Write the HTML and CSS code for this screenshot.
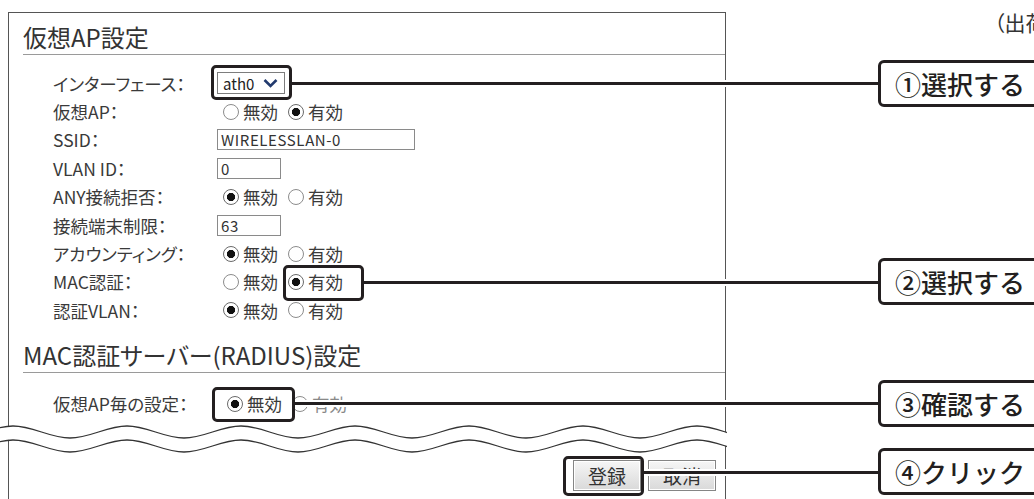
FILE: index.html
```html
<!DOCTYPE html>
<html lang="ja">
<head>
    <meta charset="utf-8">
    <title>仮想AP設定</title>
    <link rel="stylesheet" href="styles.css">
</head>
<body>
<div class="page">
    <div class="panel">
        <h2 class="section-title">仮想AP設定</h2>
        <div class="rows">
            <div class="label">インターフェース：</div>
            <div class="field">
                <div class="select">
                    <span>ath0</span>
                    <svg class="chevron" width="15" height="10" viewBox="0 0 15 10"><path d="M1.5 2 L7.5 8 L13.5 2" fill="none" stroke="#223a6e" stroke-width="2.6"/></svg>
                </div>
            </div>

            <div class="label">仮想AP：</div>
            <div class="field radios">
                <label><input type="radio" name="vap">無効</label>
                <label><input type="radio" name="vap" checked>有効</label>
            </div>

            <div class="label">SSID：</div>
            <div class="field"><input type="text" class="text-input wide" value="WIRELESSLAN-0"></div>

            <div class="label">VLAN ID：</div>
            <div class="field"><input type="text" class="text-input" value="0"></div>

            <div class="label">ANY接続拒否：</div>
            <div class="field radios">
                <label><input type="radio" name="any" checked>無効</label>
                <label><input type="radio" name="any">有効</label>
            </div>

            <div class="label">接続端末制限：</div>
            <div class="field"><input type="text" class="text-input" value="63"></div>

            <div class="label">アカウンティング：</div>
            <div class="field radios">
                <label><input type="radio" name="acct" checked>無効</label>
                <label><input type="radio" name="acct">有効</label>
            </div>

            <div class="label">MAC認証：</div>
            <div class="field radios">
                <label><input type="radio" name="mac">無効</label>
                <label><input type="radio" name="mac" checked>有効</label>
            </div>

            <div class="label">認証VLAN：</div>
            <div class="field radios">
                <label><input type="radio" name="avlan" checked>無効</label>
                <label><input type="radio" name="avlan">有効</label>
            </div>
        </div>

        <h2 class="section-title title-radius">MAC認証サーバー(RADIUS)設定</h2>
        <div class="rows rows-radius">
            <div class="label">仮想AP毎の設定：</div>
            <div class="field radios radios-radius">
                <label><input type="radio" name="perap" checked>無効</label>
                <label class="faded"><input type="radio" name="perap">有効</label>
            </div>
        </div>

        <div class="buttons">
            <button class="btn">登録</button>
            <button class="btn">取消</button>
        </div>
    </div>

    <!-- 省略の波線 -->
    <svg class="break" width="727" height="40" viewBox="0 0 727 40">
        <path d="M-101,13 c20.5,0 36.5,12 57,12 s36.5,-12 57,-12 s36.5,12 57,12 s36.5,-12 57,-12 s36.5,12 57,12 s36.5,-12 57,-12 s36.5,12 57,12 s36.5,-12 57,-12 s36.5,12 57,12 s36.5,-12 57,-12 s36.5,12 57,12 s36.5,-12 57,-12 s36.5,12 57,12 s36.5,-12 57,-12 s36.5,12 57,12 s36.5,-12 57,-12" fill="none" stroke="#fff" stroke-width="13"/>
        <path d="M-101,6 c20.5,0 36.5,12 57,12 s36.5,-12 57,-12 s36.5,12 57,12 s36.5,-12 57,-12 s36.5,12 57,12 s36.5,-12 57,-12 s36.5,12 57,12 s36.5,-12 57,-12 s36.5,12 57,12 s36.5,-12 57,-12 s36.5,12 57,12 s36.5,-12 57,-12 s36.5,12 57,12 s36.5,-12 57,-12 s36.5,12 57,12 s36.5,-12 57,-12" fill="none" stroke="#333" stroke-width="1.3"/>
        <path d="M-101,20 c20.5,0 36.5,12 57,12 s36.5,-12 57,-12 s36.5,12 57,12 s36.5,-12 57,-12 s36.5,12 57,12 s36.5,-12 57,-12 s36.5,12 57,12 s36.5,-12 57,-12 s36.5,12 57,12 s36.5,-12 57,-12 s36.5,12 57,12 s36.5,-12 57,-12 s36.5,12 57,12 s36.5,-12 57,-12 s36.5,12 57,12 s36.5,-12 57,-12" fill="none" stroke="#333" stroke-width="1.3"/>
    </svg>

    <div class="note">（出荷時の設定）</div>

    <!-- 手順の注記 -->
    <div class="leader leader-1"></div>
    <div class="leader leader-2"></div>
    <div class="leader leader-3"></div>
    <div class="leader leader-4"></div>

    <div class="ring ring-1"></div>
    <div class="ring ring-2"></div>
    <div class="ring ring-3"></div>
    <div class="ring ring-4"></div>

    <div class="callout callout-1">①選択する</div>
    <div class="callout callout-2">②選択する</div>
    <div class="callout callout-3">③確認する</div>
    <div class="callout callout-4">④クリック</div>
</div>
</body>
</html>
```

FILE: styles.css
```css
body {
    margin: 0;
    width: 1034px;
    height: 499px;
    overflow: hidden;
    background-color: #fff;
    font-family: "Noto Sans CJK JP", "Noto Sans", sans-serif;
    font-feature-settings: "palt";
    color: #333;
}

.page {
    position: relative;
    width: 1034px;
    height: 499px;
    padding: 12px 0 0 8px;
    box-sizing: border-box;
}

.panel {
    width: 718px;
    height: 530px;
    border: 1px solid #555;
    box-sizing: border-box;
    padding-left: 14px;
}

.section-title {
    margin: 9px 0 0;
    padding-bottom: 2px;
    font-size: 24px;
    line-height: 30px;
    font-weight: normal;
    color: #333;
    border-bottom: 1px solid #9a9a9a;
}

.title-radius {
    margin-top: 15px;
}

.rows {
    display: grid;
    grid-template-columns: 164px auto;
    grid-auto-rows: 28.4px;
    align-items: center;
    padding-left: 30px;
    margin-top: 14px;
    font-size: 17.5px;
}

.rows-radius {
    margin-top: 17px;
}

.label {
    color: #3a3a3a;
    white-space: nowrap;
}

.field {
    display: flex;
    align-items: center;
}

.select {
    display: flex;
    align-items: center;
    justify-content: space-between;
    width: 68px;
    height: 22px;
    padding: 0 6px 0 5px;
    border: 1px solid #7d7d7d;
    box-sizing: border-box;
    font-size: 15px;
    color: #222;
}

.text-input {
    width: 64px;
    height: 21px;
    padding: 0 3px;
    border: 1px solid #8a8a8a;
    box-sizing: border-box;
    font-family: "Noto Sans CJK JP", sans-serif;
    font-size: 15px;
    letter-spacing: 0.6px;
    color: #333;
    outline: none;
}

.text-input.wide {
    width: 198px;
}

.radios {
    gap: 10px;
    margin-left: 6px;
}

.radios-radius {
    margin-left: 10px;
}

.radios label {
    display: flex;
    align-items: center;
    gap: 4px;
    color: #3a3a3a;
}

.radios input {
    appearance: none;
    width: 16px;
    height: 16px;
    margin: 0;
    border: 1px solid #8c8c8c;
    border-radius: 50%;
    background: #fff;
}

.radios input:checked {
    border-color: #6a6a6a;
    background: radial-gradient(circle, #111 0 3.8px, #fff 4.4px);
}

.radios .faded {
    color: #888;
}

.buttons {
    display: flex;
    justify-content: flex-end;
    gap: 7px;
    padding-right: 9px;
    margin-top: 42px;
}

.btn {
    width: 68px;
    height: 31px;
    padding: 0;
    border: 1px solid #858585;
    background: linear-gradient(#f6f6f6, #d9d9d9);
    box-shadow: inset 0 0 0 1px #fff;
    font-family: "Noto Sans CJK JP", sans-serif;
    font-size: 19px;
    color: #333;
}

.break {
    position: absolute;
    left: 0;
    top: 420px;
}

.note {
    position: absolute;
    left: 994px;
    top: 8px;
    font-size: 21px;
    line-height: 28px;
    white-space: nowrap;
    color: #333;
}

.leader {
    position: absolute;
    height: 3px;
    background: #231f20;
    box-shadow: 0 0 0 2px #fff;
}

.leader-1 { left: 292px; top: 82px; width: 586px; }
.leader-2 { left: 364px; top: 281px; width: 514px; }
.leader-3 { left: 295px; top: 402px; width: 583px; }
.leader-4 { left: 644px; top: 471px; width: 234px; }

.ring {
    position: absolute;
    border: 3px solid #231f20;
    border-radius: 5px;
    box-sizing: border-box;
}

.ring-1 { left: 211px; top: 65px; width: 81px; height: 35px; }
.ring-2 { left: 283px; top: 265px; width: 81px; height: 36px; }
.ring-3 { left: 212px; top: 387px; width: 83px; height: 35px; }
.ring-4 { left: 563px; top: 456px; width: 81px; height: 40px; }

.callout {
    position: absolute;
    left: 878px;
    width: 200px;
    height: 47px;
    padding-left: 14px;
    border: 3px solid #231f20;
    border-radius: 6px;
    box-sizing: border-box;
    background: #fff;
    font-size: 26px;
    line-height: 41px;
    font-weight: 500;
    color: #231f20;
    white-space: nowrap;
    font-feature-settings: normal;
}

.callout-1 { top: 60px; }
.callout-2 { top: 258px; }
.callout-3 { top: 380px; }
.callout-4 { top: 448px; }
```
